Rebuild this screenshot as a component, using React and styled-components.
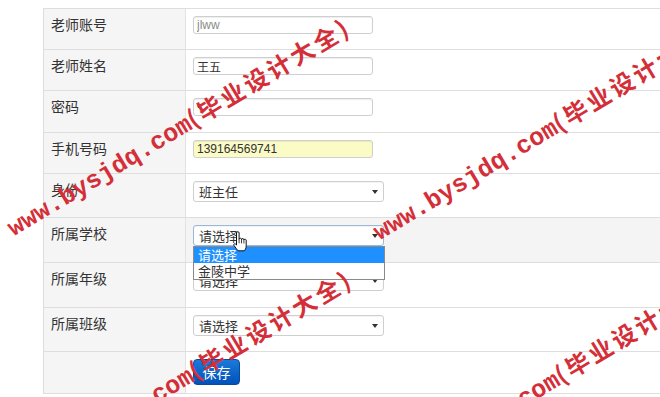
import React from 'react';
import styled, { createGlobalStyle } from 'styled-components';

const GlobalStyle = createGlobalStyle`
  html, body {
    margin: 0;
    padding: 0;
    background: #fff;
  }
  body {
    font-family: "Liberation Sans", "Noto Sans CJK SC", sans-serif;
  }
`;

const Page = styled.div`
  position: relative;
  width: 660px;
  height: 397px;
  overflow: hidden;
  box-sizing: border-box;
  padding: 8px 0 0 43px;
  background: #fff;
`;

const FormTable = styled.div`
  width: 720px;
  border-left: 1px solid #ddd;
`;

const Row = styled.div`
  display: grid;
  grid-template-columns: 142px 1fr;
  box-sizing: border-box;
  height: ${p => p.h}px;
  border-top: 1px solid #dedede;
  &:last-child {
    border-bottom: 1px solid #dedede;
  }
`;

const Label = styled.div`
  box-sizing: border-box;
  background: #f5f5f5;
  border-right: 1px solid #e2e2e2;
  padding: 5px 7px;
  line-height: 20px;
  font-size: 14px;
  color: #333;
  font-family: "Noto Sans CJK SC", sans-serif;
`;

const Cell = styled.div`
  position: relative;
  box-sizing: border-box;
  padding: 7px 7px;
  background: ${p => (p.hovered ? '#f4f4f4' : '#fff')};
`;

const TextInput = styled.input`
  display: block;
  box-sizing: border-box;
  width: 180px;
  height: 18px;
  margin: 0;
  padding: 0 3px;
  border: 1px solid #cfcfcf;
  border-radius: 3px;
  box-shadow: inset 0 1px 1px rgba(0, 0, 0, 0.07);
  background: ${p => (p.autofill ? '#fbfbc6' : '#fff')};
  color: ${p => p.tone || '#333'};
  font-size: 12px;
  font-family: "Liberation Sans", "Noto Sans CJK SC", sans-serif;
  outline: none;
`;

const SelectBox = styled.div`
  position: relative;
  box-sizing: border-box;
  width: 191px;
  height: 21px;
  padding: 0 5px;
  border: 1px solid ${p => (p.focused ? '#9bb8d6' : '#cfcfcf')};
  border-radius: 3px;
  background: #fff;
  box-shadow: inset 0 1px 1px rgba(0, 0, 0, 0.05);
  display: flex;
  align-items: center;
  justify-content: space-between;
  font-size: 13px;
  color: #333;
  font-family: "Noto Sans CJK SC", sans-serif;
`;

const Arrow = styled.span`
  width: 0;
  height: 0;
  border-left: 3px solid transparent;
  border-right: 3px solid transparent;
  border-top: 4px solid #333;
`;

const Dropdown = styled.ul`
  position: absolute;
  left: 7px;
  top: 28px;
  z-index: 2;
  box-sizing: border-box;
  width: 192px;
  margin: 0;
  padding: 0;
  list-style: none;
  background: #fff;
  border: 1px solid #8a8a8a;
  font-size: 13px;
  font-family: "Noto Sans CJK SC", sans-serif;
`;

const Option = styled.li`
  height: 16px;
  line-height: 16px;
  padding: 0 4px;
  background: ${p => (p.active ? '#1e90ff' : '#fff')};
  color: ${p => (p.active ? '#fff' : '#333')};
`;

const Cursor = styled.svg`
  position: absolute;
  left: 46px;
  top: 13px;
  z-index: 3;
`;

const SaveButton = styled.button`
  display: block;
  width: 47px;
  height: 26px;
  margin: 0;
  padding: 0;
  border: 1px solid #0a4a9c;
  border-radius: 4px;
  background: linear-gradient(to bottom, #1b7ad9, #0052b8);
  color: #fff;
  font-size: 14px;
  font-family: "Noto Sans CJK SC", sans-serif;
`;

const Mark = styled.div`
  position: absolute;
  z-index: 5;
  white-space: nowrap;
  height: 26px;
  line-height: 26px;
  transform-origin: 0 20px;
  transform: rotate(-31deg);
  color: #d42f38;
  pointer-events: none;
`;

const MarkLatin = styled.span`
  font-family: "Liberation Mono", monospace;
  font-weight: bold;
  font-size: 25px;
`;

const MarkCjk = styled.span`
  font-family: "Noto Sans CJK SC", sans-serif;
  font-weight: bold;
  font-size: 24px;
  letter-spacing: 3px;
`;

const Watermark = ({ x, y }) => (
  <Mark style={{ left: x, top: y - 20 }}>
    <MarkLatin>www.bysjdq.com</MarkLatin>
    <MarkCjk>(毕业设计大全)</MarkCjk>
  </Mark>
);

const Select = ({ value, focused, children }) => (
  <SelectBox focused={focused}>
    <span>{value}</span>
    <Arrow />
    {children}
  </SelectBox>
);

const HandCursor = () => (
  <Cursor width="16" height="22" viewBox="0 0 16 22">
    <path
      d="M4.5 2a1.3 1.3 0 0 1 2.6 0v6.3a1.2 1.2 0 0 1 2.4.3a1.2 1.2 0 0 1 2.4.5a1.2 1.2 0 0 1 2.3.7v5c0 2.4-1 4-1.8 5H6c-1-1.3-2.6-3.4-4-5.3c-.8-1.1.4-2.3 1.4-1.5l1.1 1z"
      fill="#fff"
      stroke="#111"
      strokeWidth="1"
      strokeLinejoin="round"
    />
    <path d="M7.1 8.3v4M9.5 8.6v3.8M11.9 9.1v3.4" stroke="#111" strokeWidth="0.8" />
  </Cursor>
);

const marks = [
  { x: 12, y: 234 },
  { x: 378, y: 238 },
  { x: 14, y: 486 },
  { x: 380, y: 490 },
];

export default function App() {
  return (
    <>
      <GlobalStyle />
      <Page>
        <FormTable>
          <Row h={41}>
            <Label>老师账号</Label>
            <Cell>
              <TextInput readOnly defaultValue="jlww" tone="#8a8a8a" />
            </Cell>
          </Row>
          <Row h={41}>
            <Label>老师姓名</Label>
            <Cell>
              <TextInput readOnly defaultValue="王五" />
            </Cell>
          </Row>
          <Row h={42}>
            <Label>密码</Label>
            <Cell>
              <TextInput readOnly type="password" defaultValue="1" />
            </Cell>
          </Row>
          <Row h={41}>
            <Label>手机号码</Label>
            <Cell>
              <TextInput readOnly autofill defaultValue="139164569741" />
            </Cell>
          </Row>
          <Row h={44}>
            <Label>身份</Label>
            <Cell>
              <Select value="班主任" />
            </Cell>
          </Row>
          <Row h={45}>
            <Label>所属学校</Label>
            <Cell hovered>
              <Select value="请选择" focused />
              <Dropdown>
                <Option active>请选择</Option>
                <Option>金陵中学</Option>
              </Dropdown>
              <HandCursor />
            </Cell>
          </Row>
          <Row h={45}>
            <Label>所属年级</Label>
            <Cell>
              <Select value="请选择" />
            </Cell>
          </Row>
          <Row h={44}>
            <Label>所属班级</Label>
            <Cell>
              <Select value="请选择" />
            </Cell>
          </Row>
          <Row h={43}>
            <Label />
            <Cell>
              <SaveButton type="button">保存</SaveButton>
            </Cell>
          </Row>
        </FormTable>
        {marks.map((m, i) => (
          <Watermark key={i} x={m.x} y={m.y} />
        ))}
      </Page>
    </>
  );
}
